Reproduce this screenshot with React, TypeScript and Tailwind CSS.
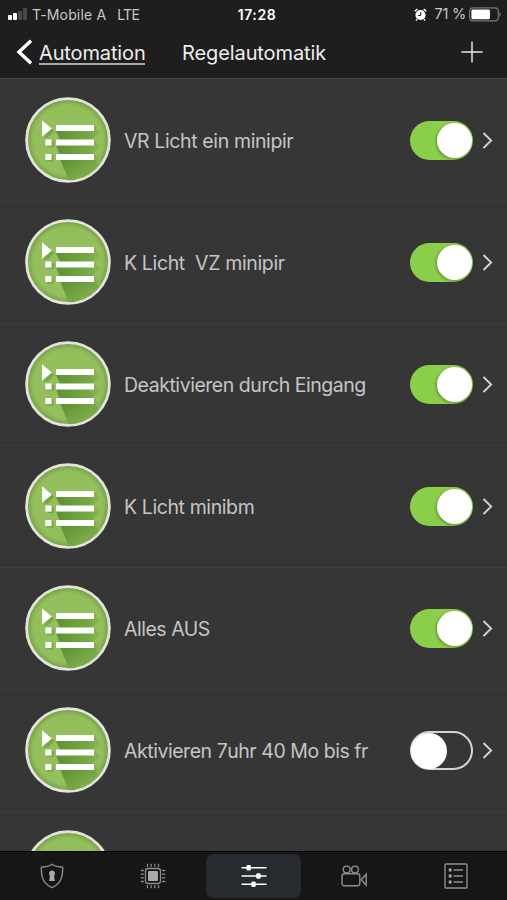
const rules = [
  { name: "VR Licht ein minipir", on: true, tracking: "tracking-[-0.38px]" },
  { name: "K Licht  VZ minipir", on: true, tracking: "tracking-[-0.36px]" },
  { name: "Deaktivieren durch Eingang", on: true, tracking: "tracking-[-0.46px]" },
  { name: "K Licht minibm", on: true, tracking: "tracking-[-0.4px]" },
  { name: "Alles AUS", on: true, tracking: "tracking-[-0.48px]" },
  { name: "Aktivieren 7uhr 40 Mo bis fr", on: false, tracking: "tracking-[-0.46px]" },
];

function RuleIcon() {
  return (
    <svg className="-mt-px block h-[86px] w-[86px] shrink-0" viewBox="0 0 86 86">
      <defs>
        <radialGradient id="disc">
          <stop offset="0" stopColor="#96c05f" />
          <stop offset="0.84" stopColor="#93be5c" />
          <stop offset="1" stopColor="#729b43" />
        </radialGradient>
        <linearGradient id="fade" gradientUnits="userSpaceOnUse" x1="40" y1="60" x2="58" y2="86">
          <stop offset="0" stopColor="#5b9030" />
          <stop offset="1" stopColor="#85b152" />
        </linearGradient>
        <linearGradient id="barShade" gradientUnits="userSpaceOnUse" x1="31" y1="0" x2="78" y2="0">
          <stop offset="0" stopColor="#5d9132" />
          <stop offset="0.7" stopColor="#78a946" />
          <stop offset="1" stopColor="#90bc5a" />
        </linearGradient>
        <clipPath id="discClip">
          <circle cx="43" cy="43" r="40.3" />
        </clipPath>
      </defs>
      <circle cx="43" cy="43" r="41.4" fill="url(#disc)" stroke="#e2e4dd" strokeWidth="2.8" />
      <g clipPath="url(#discClip)">
        <path d="M31 34L69 28L76 36L70 40L69 42.5L76 50L70 54L69 57L76 64V69L40 70L31 48.5L35 42.5Z" fill="url(#barShade)" />
        <path d="M33 57L44 84C56 84 68 77 75 69L69 62Z" fill="url(#fade)" />
        <path d="M26.8 31.4L29 34L23 40.5H18ZM26.5 42.5L29 45V50H22V48.5H26.5ZM26.5 57L28.5 59V64.5H22V63H26.5Z" fill="#5d9132" opacity="0.55" />
      </g>
      <g fill="#fff">
        <path d="M17 23.3V39.7L26.8 31.4Z" />
        <path d="M31 28H69V34H31ZM31 42.5H69V48.5H31ZM31 57H69V63H31ZM20.3 42.5H26.5V48.5H20.3ZM20.3 57H26.5V63H20.3Z" />
      </g>
    </svg>
  );
}

function Toggle({ on }: { on: boolean }) {
  return on ? (
    <div className="flex h-[39px] w-[63px] shrink-0 items-center justify-end rounded-full bg-[#8bce49] pr-[1.5px]">
      <div className="h-[35px] w-[35px] rounded-full bg-white shadow-[-1px_1px_3px_rgba(0,0,0,0.3)]" />
    </div>
  ) : (
    <div className="flex h-[39px] w-[63px] shrink-0 items-center rounded-full border-2 border-[#d4d4d4]">
      <div className="-ml-px h-9 w-9 rounded-full bg-white" />
    </div>
  );
}

function StatusBar() {
  return (
    <div className="grid h-7 grid-cols-3 items-center text-[14px] text-[#c9c9c9]">
      <div className="flex items-center pl-2">
        <div className="mr-[5px] flex h-3 items-end gap-[1px]">
          <i className="h-[5px] w-1 rounded-[1px] bg-white" />
          <i className="h-[7px] w-1 rounded-[1px] bg-white" />
          <i className="h-[9px] w-1 rounded-[1px] bg-[#484848]" />
          <i className="h-3 w-1 rounded-[1px] bg-[#484848]" />
        </div>
        <span className="whitespace-nowrap tracking-[0.16px]">T-Mobile A</span>
        <span className="ml-[11px] tracking-[-0.7px]">LTE</span>
      </div>
      <div className="pl-[7px] text-center text-[14px] font-semibold tracking-[0.6px] text-white">17:28</div>
      <div className="flex items-center justify-end pr-[6px]">
        <svg className="mr-[7px] h-[13px] w-[13px]" viewBox="0 0 13 13">
          <circle cx="6.5" cy="7" r="5.1" fill="#fff" />
          <path d="M.8 3.2L3.4 1M12.2 3.2L9.6 1M3 11.2L2 12.5M10 11.2L11 12.5" stroke="#fff" strokeWidth="1.5" />
          <path d="M6.7 4V7.5H4" fill="none" stroke="#1e1e1e" />
        </svg>
        <span className="mr-[3px] whitespace-nowrap text-[14.5px] tracking-[-0.2px]">71 %</span>
        <svg className="h-[15px] w-8" viewBox="0 0 32 15">
          <rect x=".7" y=".9" width="28.6" height="13" rx="3.4" fill="none" stroke="#777" strokeWidth="1.2" />
          <rect x="2.4" y="2.6" width="18.6" height="9.6" rx="1.4" fill="#fff" />
          <path d="M30.4 5C32 6 32 9 30.4 10Z" fill="#777" />
        </svg>
      </div>
    </div>
  );
}

function TabBar() {
  return (
    <nav className="flex h-[49px] shrink-0 items-center border-t border-[#050505] bg-[#161616] text-[#8e8e8e]">
      <div className="flex w-[103px] justify-center">
        <svg className="h-[26px] w-6" viewBox="0 0 24 26" fill="none" stroke="currentColor" strokeWidth="1.4">
          <path d="M12 1.3C9 3.6 5 4.2 1.4 4.2C1 14 3 20.5 12 24.7C21 20.5 23 14 22.6 4.2C19 4.2 15 3.6 12 1.3Z" />
          <path d="M12 7.5A2.9 2.9 0 0 0 9.8 12.4V14L9.2 18H14.8L14.2 14V12.4A2.9 2.9 0 0 0 12 7.5Z" fill="#aaa" stroke="none" />
        </svg>
      </div>
      <div className="flex w-[103px] justify-center pr-[3px]">
        <svg className="h-[26px] w-[26px]" viewBox="0 0 26 26" fill="none" stroke="currentColor" strokeWidth="1.3">
          <rect x="5.5" y="5.5" width="15" height="15" rx="2.5" />
          <rect x="8" y="8" width="10" height="10" rx="1" fill="#aaa" stroke="none" />
          <path d="M7.5 .8V3.8M11.2 .8V3.8M14.8 .8V3.8M18.5 .8V3.8M7.5 22.2V25.2M11.2 22.2V25.2M14.8 22.2V25.2M18.5 22.2V25.2M.8 7.5H3.8M.8 11.2H3.8M.8 14.8H3.8M.8 18.5H3.8M22.2 7.5H25.2M22.2 11.2H25.2M22.2 14.8H25.2M22.2 18.5H25.2" />
        </svg>
      </div>
      <div className="flex h-[44px] w-[95px] items-center justify-center rounded-[7px] bg-[#272a2f]">
        <svg className="h-[22px] w-[26px]" viewBox="0 0 26 22" stroke="#fff" fill="#fff" strokeWidth="1.4">
          <path d="M.5 2.8H25.5M.5 11H25.5M.5 19.2H25.5" />
          <g stroke="none">
            <rect x="5.5" y="0" width="4.4" height="5.6" rx="1.3" />
            <rect x="15.3" y="8.2" width="4.4" height="5.6" rx="1.3" />
            <rect x="10.3" y="16.4" width="4.4" height="5.6" rx="1.3" />
          </g>
        </svg>
      </div>
      <div className="flex w-[106px] justify-center">
        <svg className="h-[22px] w-[27px]" viewBox="0 0 27 22" fill="none" stroke="currentColor" strokeWidth="1.4">
          <circle cx="5.7" cy="4.5" r="3.4" />
          <circle cx="14" cy="4.5" r="3.4" />
          <rect x="1" y="8.7" width="17.8" height="12" rx="2.3" />
          <path d="M20.3 14.7L25.2 9.2V20.2Z" />
        </svg>
      </div>
      <div className="flex flex-1 justify-center pr-[2px]">
        <svg className="h-[26px] w-6" viewBox="0 0 24 26" fill="none" stroke="currentColor" strokeWidth="1.4">
          <rect x="1" y="1" width="22" height="24" rx=".8" />
          <path d="M9.5 7H19M9.5 13H19M9.5 19H19" />
          <path d="M4.8 5.6H7.6V8.4H4.8ZM4.8 11.6H7.6V14.4H4.8ZM4.8 17.6H7.6V20.4H4.8Z" fill="#aaa" stroke="none" />
        </svg>
      </div>
    </nav>
  );
}

export default function App() {
  return (
    <div className="flex h-[900px] w-[507px] flex-col overflow-hidden bg-[#363636] font-['Inter',sans-serif]">
      <header className="h-[79px] shrink-0 border-b border-[#444] bg-[#1e1e1e]">
        <StatusBar />
        <div className="flex h-12 items-center text-[20px] text-[#ededed]">
          <svg className="ml-4 h-[26px] w-[17px]" viewBox="0 0 17 26" fill="none" stroke="#fff" strokeWidth="3.4">
            <path d="M15 1.8L3 13L15 24.2" />
          </svg>
          <div className="ml-[6px] mt-[2px] h-[23px] w-[106px] border-b-2 border-[#aaa] leading-[22px] tracking-[-0.13px]">Automation</div>
          <h1 className="ml-[37px] flex-1 whitespace-nowrap pt-[2px] tracking-[-0.1px]">Regelautomatik</h1>
          <svg className="mr-6 h-[22px] w-[22px]" viewBox="0 0 22 22" stroke="#e5e5e5" strokeWidth="1.5">
            <path d="M11 .5V21.5M.5 11H21.5" />
          </svg>
        </div>
      </header>
      <main className="min-h-0 flex-1 overflow-hidden pt-px">
        {rules.map((rule) => (
          <div key={rule.name} className="flex h-[122px] items-center border-b border-[#3e3e3e] pl-[25px]">
            <RuleIcon />
            <span className={`ml-[13px] flex-1 whitespace-pre pt-[3px] text-[19.5px] text-[#c5c5c5] ${rule.tracking}`}>{rule.name}</span>
            <Toggle on={rule.on} />
            <svg className="ml-[9px] mr-[14px] h-[17px] w-[11px]" viewBox="0 0 11 17" fill="none" stroke="#d8d8d8" strokeWidth="1.8">
              <path d="M1.5 1L9.2 8.5L1.5 16" />
            </svg>
          </div>
        ))}
        <div className="flex h-[122px] items-center pl-[25px]">
          <RuleIcon />
        </div>
      </main>
      <TabBar />
    </div>
  );
}
